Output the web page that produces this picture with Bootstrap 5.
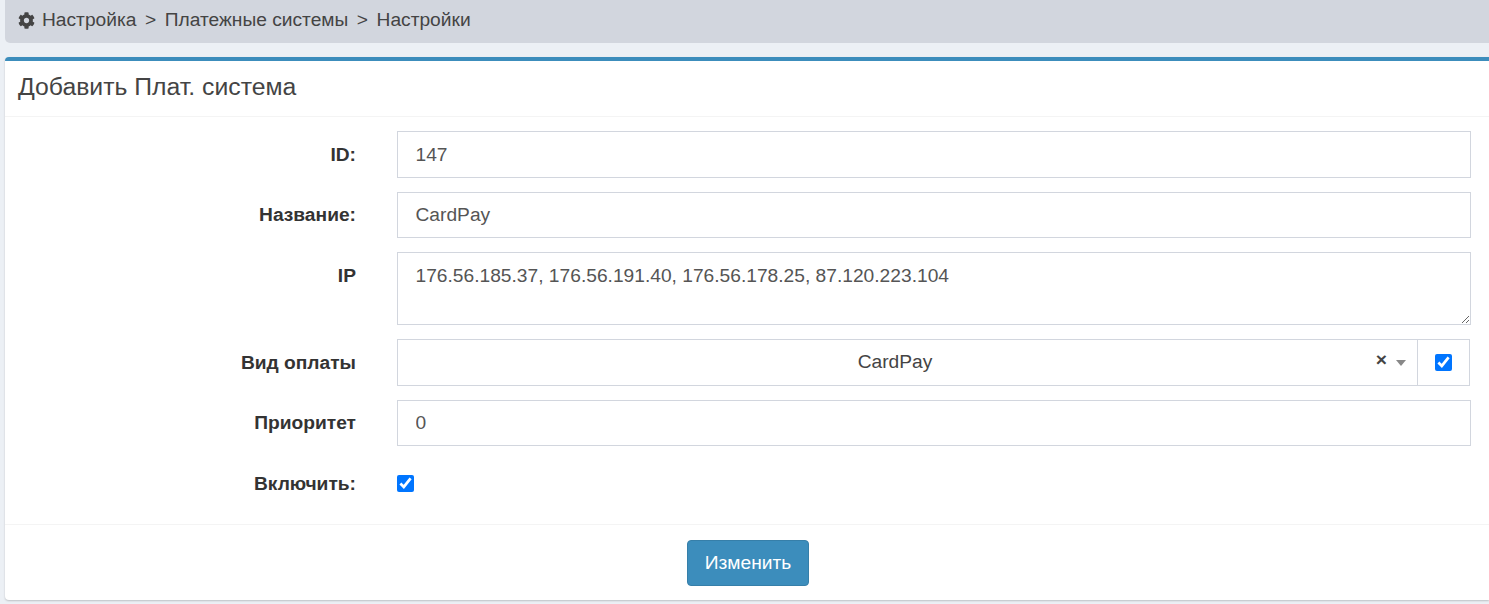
<!doctype html>
<html lang="ru">
<head>
<meta charset="utf-8">
<title>Плат. система</title>
<link rel="stylesheet" href="https://cdn.jsdelivr.net/npm/bootstrap@5.3.0/dist/css/bootstrap.min.css">
<style>
html,body{height:100%;overflow:hidden}
body{background:#ecf0f5;font-family:"Liberation Sans",Arial,sans-serif;font-size:19.2px;color:#444;padding-left:5px}
.crumbs{background:#d2d6de;height:43px;border-radius:0 0 0 5px;display:flex;align-items:center;gap:8.5px;padding:0 13px 3px;color:#444;line-height:1}
.crumbs svg{width:17px;height:17px;fill:#444;margin-right:-1.5px}
.panel{margin-top:14px;background:#fff;border-top:4px solid #3c8dbc;border-radius:4px 0 0 4px;box-shadow:0 1px 2px rgba(0,0,0,.2);height:543px;display:flex;flex-direction:column}
.panel-head{height:56px;border-bottom:1px solid #f4f4f4;padding:0 13px 3px;display:flex;align-items:center}
.panel-head h3{font-size:24.75px;font-weight:400;margin:0;color:#444}
.panel-body{padding:14.3px 0 0 4px;flex:1}
.fm-row{--bs-gutter-x:0;margin-bottom:14px}
.fm-label{font-weight:700;color:#333;text-align:right;padding:9.5px 23px 0 0;margin:0}
.fm-field{padding:0 18px}
.fm-input{display:block;width:100%;height:46.5px;border:1px solid #d2d6de;border-radius:0;padding:0 17.5px;font-size:19.2px;color:#555;background:#fff;box-shadow:none}
textarea.fm-input{height:73px;padding-top:9px}
.pick{display:flex;height:46.5px;margin-right:1px}
.pick-main{flex:1;border:1px solid #d2d6de;position:relative;display:flex;align-items:center;justify-content:center;padding-right:25px;color:#444;min-width:0}
.pick-clear{position:absolute;right:30px;top:8px;font-weight:700;font-size:19.2px;line-height:1.3}
.pick-arrow{position:absolute;right:11px;top:20px;width:0;height:0;border-left:5.5px solid transparent;border-right:5.5px solid transparent;border-top:6px solid #888}
.pick-add{width:52px;border:1px solid #d2d6de;border-left:0;display:flex;align-items:center;justify-content:center}
.tick{width:17px;height:17px;margin:0}
.toggle-row{height:46.5px;display:flex;align-items:center}
.panel-foot{height:76px;border-top:1px solid #f4f4f4;display:flex;justify-content:center;padding:15px 0 0 2px}
.save{background:#3c8dbc;border:1px solid #367fa9;color:#fff;font-size:19.2px;width:122px;height:46px;border-radius:4px;padding:0}
.save:hover{background:#367fa9;color:#fff}
</style>
</head>
<body>
<nav class="crumbs">
<svg viewBox="0 0 512 512" aria-hidden="true"><path d="M487.4 315.7l-42.6-24.6c4.3-23.2 4.3-47 0-70.2l42.6-24.6c4.9-2.8 7.1-8.6 5.5-14-11.1-35.6-30-67.8-54.7-94.6-3.8-4.1-10-5.1-14.8-2.3L380.8 110c-17.9-15.4-38.5-27.3-60.8-35.1V25.8c0-5.6-3.9-10.5-9.4-11.7-36.7-8.2-74.3-7.8-109.2 0-5.5 1.2-9.4 6.1-9.4 11.7V75c-22.2 7.9-42.8 19.8-60.8 35.1L88.7 85.5c-4.9-2.8-11-1.9-14.8 2.3-24.7 26.7-43.6 58.9-54.7 94.6-1.7 5.4.6 11.2 5.5 14L67.3 221c-4.3 23.2-4.3 47 0 70.2l-42.6 24.6c-4.9 2.8-7.1 8.6-5.5 14 11.1 35.6 30 67.8 54.7 94.6 3.8 4.1 10 5.1 14.8 2.3l42.6-24.6c17.9 15.4 38.5 27.3 60.8 35.1v49.2c0 5.6 3.9 10.5 9.4 11.7 36.7 8.2 74.3 7.8 109.2 0 5.5-1.2 9.4-6.1 9.4-11.7v-49.2c22.2-7.9 42.8-19.8 60.8-35.1l42.6 24.6c4.9 2.8 11 1.9 14.8-2.3 24.7-26.7 43.6-58.9 54.7-94.6 1.5-5.5-.7-11.3-5.6-14.1zM256 336c-44.1 0-80-35.9-80-80s35.9-80 80-80 80 35.9 80 80-35.9 80-80 80z"/></svg>
<span>Настройка</span><span>&gt;</span><span>Платежные системы</span><span>&gt;</span><span>Настройки</span>
</nav>
<section class="panel">
<header class="panel-head"><h3>Добавить Плат. система</h3></header>
<form class="panel-body">
<div class="row fm-row"><label class="col-3 fm-label">ID:</label><div class="col-9 fm-field"><input class="fm-input" value="147"></div></div>
<div class="row fm-row"><label class="col-3 fm-label">Название:</label><div class="col-9 fm-field"><input class="fm-input" value="CardPay"></div></div>
<div class="row fm-row"><label class="col-3 fm-label">IP</label><div class="col-9 fm-field"><textarea class="fm-input">176.56.185.37, 176.56.191.40, 176.56.178.25, 87.120.223.104</textarea></div></div>
<div class="row fm-row"><label class="col-3 fm-label">Вид оплаты</label><div class="col-9 fm-field"><div class="pick"><div class="pick-main">CardPay<span class="pick-clear">×</span><span class="pick-arrow"></span></div><div class="pick-add"><input class="tick" type="checkbox" checked></div></div></div></div>
<div class="row fm-row"><label class="col-3 fm-label">Приоритет</label><div class="col-9 fm-field"><input class="fm-input" value="0"></div></div>
<div class="row fm-row"><label class="col-3 fm-label">Включить:</label><div class="col-9 fm-field toggle-row"><input class="tick" type="checkbox" checked></div></div>
</form>
<footer class="panel-foot"><button type="button" class="btn save">Изменить</button></footer>
</section>
</body>
</html>
